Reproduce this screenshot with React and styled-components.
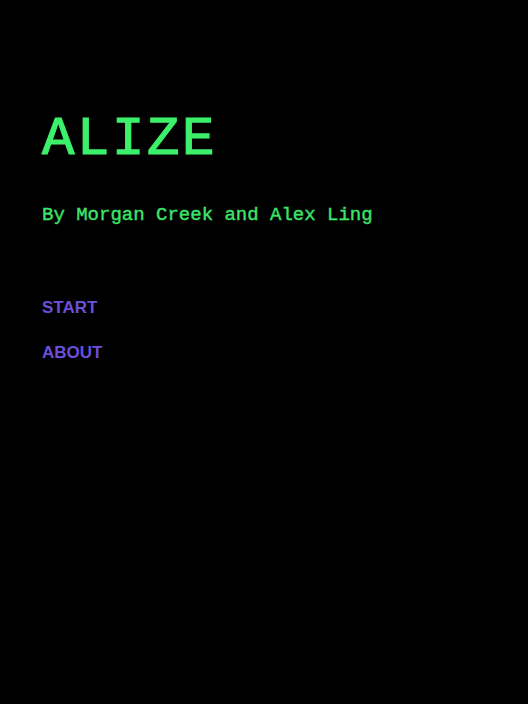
import styled, { createGlobalStyle } from "styled-components";

const GlobalStyle = createGlobalStyle`
  html, body {
    margin: 0;
    padding: 0;
    background: #000;
  }
`;

const Screen = styled.div`
  min-height: 704px;
  background: #000;
  padding: 108px 42px 0;
  box-sizing: border-box;
`;

const Title = styled.h1`
  margin: 0;
  font-family: "Liberation Mono", "DejaVu Sans Mono", monospace;
  font-weight: normal;
  font-size: 54px;
  line-height: 64px;
  letter-spacing: 2.6px;
  color: #3df06b;
  -webkit-text-stroke: 1.2px #3df06b;
`;

const Byline = styled.p`
  margin: 31px 0 0;
  font-family: "Liberation Mono", "DejaVu Sans Mono", monospace;
  font-size: 19px;
  line-height: 24px;
  color: #3de46a;
  -webkit-text-stroke: 0.4px #3de46a;
`;

const Menu = styled.nav`
  display: flex;
  flex-direction: column;
  align-items: flex-start;
  gap: 24px;
  margin-top: 70px;
`;

const MenuItem = styled.a`
  font-family: "Liberation Sans", "DejaVu Sans", sans-serif;
  font-weight: bold;
  font-size: 17px;
  line-height: 21px;
  color: #6b4fdb;
  text-decoration: none;
  cursor: pointer;
`;

export default function App() {
  return (
    <>
      <GlobalStyle />
      <Screen>
        <Title>ALIZE</Title>
        <Byline>By Morgan Creek and Alex Ling</Byline>
        <Menu>
          <MenuItem>START</MenuItem>
          <MenuItem>ABOUT</MenuItem>
        </Menu>
      </Screen>
    </>
  );
}
